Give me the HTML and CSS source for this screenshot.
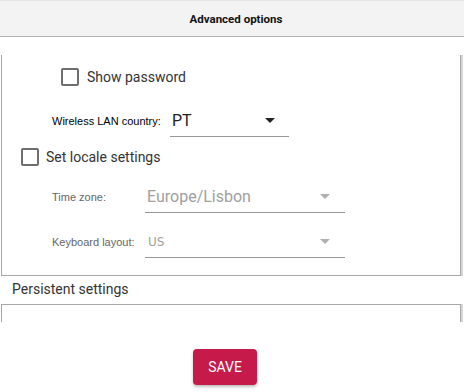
FILE: index.html
```html
<!DOCTYPE html>
<html>
<head>
<meta charset="utf-8">
<link rel="stylesheet" href="styles.css">
</head>
<body>
<div class="dialog">
  <header class="header">Advanced options</header>
  <div class="scroll">
    <div class="box box-open">
      <label class="check-row indent-pw">
        <span class="checkbox"></span>
        <span class="check-text">Show password</span>
      </label>
      <div class="field-row row-wlan">
        <span class="label label-wlan">Wireless LAN country:</span>
        <div class="select select-wlan">
          <span class="value">PT</span>
          <span class="arrow"></span>
        </div>
      </div>
      <label class="check-row indent-locale">
        <span class="checkbox"></span>
        <span class="check-text">Set locale settings</span>
      </label>
      <div class="field-row row-tz disabled">
        <span class="label label-locale">Time zone:</span>
        <div class="select select-locale">
          <span class="value">Europe/Lisbon</span>
          <span class="arrow"></span>
        </div>
      </div>
      <div class="field-row row-kb disabled">
        <span class="label label-locale">Keyboard layout:</span>
        <div class="select select-locale">
          <span class="value value-small">us</span>
          <span class="arrow"></span>
        </div>
      </div>
    </div>
    <div class="legend">Persistent settings</div>
    <div class="box box-persist"></div>
  </div>
  <footer class="footer">
    <button class="save">SAVE</button>
  </footer>
</div>
</body>
</html>
```

FILE: styles.css
```css
html, body {
  margin: 0;
  padding: 0;
  background: #ffffff;
}
body {
  font-family: Roboto, "Liberation Sans", sans-serif;
  color: #222;
  width: 464px;
  height: 392px;
  overflow: hidden;
}
.dialog {
  display: flex;
  flex-direction: column;
  height: 392px;
}
.header {
  box-sizing: border-box;
  border-top: 1px solid #e6e6e6;
  background: #f3f3f3;
  border-bottom: 1px solid #b4b4b4;
  height: 37px;
  display: flex;
  align-items: center;
  justify-content: center;
  padding-left: 8px;
  font-weight: bold;
  font-size: 11.5px;
  color: #111;
}
.scroll {
  height: 285px;
  overflow: hidden;
  padding-top: 18px;
  box-sizing: border-box;
}
.box {
  margin-left: 1px;
  width: 460px;
  box-sizing: border-box;
  border: 1px solid #a8a8a8;
  box-shadow: 2px 0 0 #d6d6d6;
}
.box-open {
  border-top: none;
  padding-top: 13px;
  padding-bottom: 17px;
  display: flex;
  flex-direction: column;
}
.box-persist {
  height: 60px;
  border-bottom: none;
}
.legend {
  height: 28px;
  display: flex;
  align-items: center;
  padding-left: 12px;
  padding-bottom: 2px;
  font-size: 14px;
  color: #333;
  box-sizing: border-box;
}
.check-row {
  display: flex;
  align-items: center;
  height: 18px;
}
.indent-pw {
  padding-left: 59px;
}
.indent-locale {
  padding-left: 19px;
  margin-top: 11px;
}
.checkbox {
  width: 18px;
  height: 18px;
  box-sizing: border-box;
  border: 2px solid #6e6e6e;
  border-radius: 2px;
  background: #fff;
}
.check-text {
  margin-left: 8px;
  font-size: 14px;
  color: #333;
}
.indent-locale .check-text {
  margin-left: 7px;
}
.field-row {
  display: flex;
  align-items: center;
  padding-left: 50px;
  height: 32px;
}
.row-wlan {
  margin-top: 19px;
}
.row-tz {
  margin-top: 15px;
}
.row-kb {
  margin-top: 13px;
}
.label {
  font-family: "Liberation Sans", Arial, sans-serif;
  font-size: 11px;
  color: #000;
}
.label-wlan {
  width: 118px;
}
.label-locale {
  width: 93px;
}
.disabled .label {
  color: #666;
}
.select {
  height: 32px;
  box-sizing: border-box;
  border-bottom: 1px solid #999;
  display: flex;
  align-items: center;
  justify-content: space-between;
  padding-left: 2px;
  padding-right: 14px;
}
.select-wlan {
  width: 119px;
}
.select-locale {
  width: 200px;
  padding-right: 15px;
}
.value {
  font-size: 16px;
  color: #222;
}
.disabled .value {
  color: #a0a0a0;
}
.value-small {
  font-family: "DejaVu Sans", sans-serif;
  font-size: 12px;
  text-transform: uppercase;
  padding-left: 1px;
}
.arrow {
  width: 0;
  height: 0;
  border-left: 5px solid transparent;
  border-right: 5px solid transparent;
  border-top: 5px solid #222;
}
.disabled .arrow {
  border-top-color: #b0b0b0;
}
.footer {
  flex: 1;
  display: flex;
  justify-content: center;
  align-items: flex-start;
  padding-top: 27px;
  padding-right: 14px;
}
.save {
  width: 64px;
  height: 36px;
  border: none;
  border-radius: 4px;
  background: #c51a4a;
  color: #fff;
  font-family: Roboto, "Liberation Sans", sans-serif;
  font-size: 14px;
  box-shadow: 0 2px 3px rgba(0,0,0,0.25);
  padding: 0;
}
```
